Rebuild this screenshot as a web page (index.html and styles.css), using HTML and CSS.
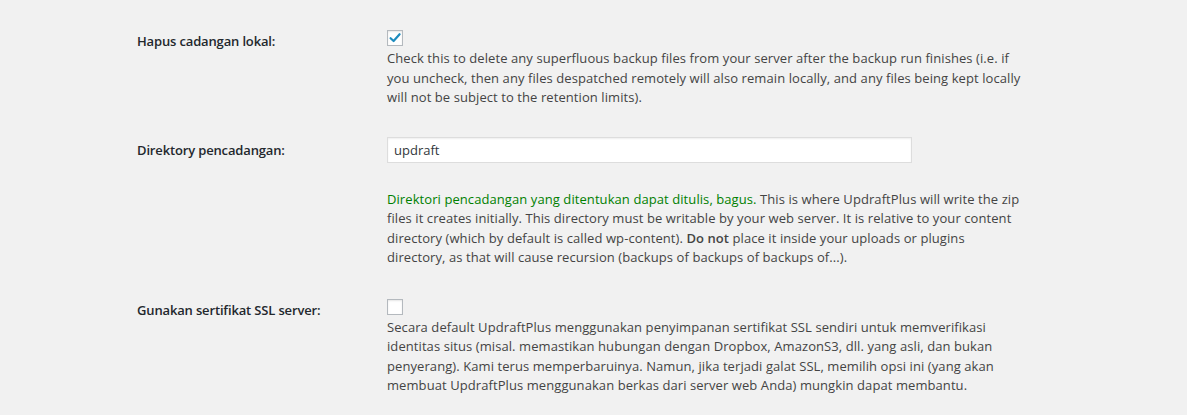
FILE: index.html
```
<!DOCTYPE html>
<html lang="id">
<head>
<meta charset="utf-8">
<title>UpdraftPlus settings</title>
<link rel="stylesheet" href="styles.css">
</head>
<body>
<div class="settings">
  <div class="row row-local">
    <div class="label">Hapus cadangan lokal:</div>
    <div class="field">
      <span class="checkbox checked"><svg viewBox="0 0 16 16" width="16" height="16"><path d="M3.6 8.2 L6.6 11 L12.6 4.2" fill="none" stroke="#1e8cbe" stroke-width="2.2" stroke-linecap="round" stroke-linejoin="round"/></svg></span>
      <p class="desc">Check this to delete any superfluous backup files from your server after the backup run finishes (i.e. if<br>you uncheck, then any files despatched remotely will also remain locally, and any files being kept locally<br>will not be subject to the retention limits).</p>
    </div>
  </div>
  <div class="row row-dir">
    <div class="label label-input">Direktory pencadangan:</div>
    <div class="field">
      <div class="input">updraft</div>
      <p class="desc desc-dir"><span class="ok">Direktori pencadangan yang ditentukan dapat ditulis, bagus.</span> This is where UpdraftPlus will write the zip<br>files it creates initially. This directory must be writable by your web server. It is relative to your content<br>directory (which by default is called wp-content). <b>Do not</b> place it inside your uploads or plugins<br>directory, as that will cause recursion (backups of backups of backups of...).</p>
    </div>
  </div>
  <div class="row row-ssl">
    <div class="label">Gunakan sertifikat SSL server:</div>
    <div class="field">
      <span class="checkbox"></span>
      <p class="desc">Secara default UpdraftPlus menggunakan penyimpanan sertifikat SSL sendiri untuk memverifikasi<br>identitas situs (misal. memastikan hubungan dengan Dropbox, AmazonS3, dll. yang asli, dan bukan<br>penyerang). Kami terus memperbaruinya. Namun, jika terjadi galat SSL, memilih opsi ini (yang akan<br>membuat UpdraftPlus menggunakan berkas dari server web Anda) mungkin dapat membantu.</p>
    </div>
  </div>
</div>
</body>
</html>
```
FILE: styles.css
```
html, body {
  margin: 0;
  padding: 0;
  background: #f1f1f1;
}
body {
  font-family: "Open Sans", "Noto Sans", sans-serif;
  font-size: 13px;
  color: #444;
  width: 1187px;
  height: 415px;
  overflow: hidden;
}
.settings {
  padding: 30px 0 0 137px;
}
.row {
  display: grid;
  grid-template-columns: 250px 750px;
}
.row-dir {
  padding-top: 29px;
}
.row-ssl {
  padding-top: 31px;
}
.label {
  font-weight: 600;
  color: #23282d;
  line-height: 19.5px;
  padding-top: 2px;
  font-size: 13px;
  letter-spacing: -0.15px;
}
.label-input {
  padding-top: 4px;
}
.field {
  display: flex;
  flex-direction: column;
  align-items: flex-start;
}
.checkbox {
  display: block;
  width: 14px;
  height: 14px;
  border: 1px solid #b4b9be;
  background: #fff;
  box-shadow: inset 0 1px 2px rgba(0,0,0,0.1);
  margin: 0 0 3px 0;
}
.checkbox svg {
  display: block;
  margin: -1px 0 0 -1px;
}
.desc {
  margin: 0;
  line-height: 19.5px;
  white-space: nowrap;
  letter-spacing: 0.08px;
}
.desc b {
  font-weight: 600;
}
.input {
  box-sizing: border-box;
  width: 525px;
  height: 26px;
  border: 1px solid #ddd;
  background: #fff;
  box-shadow: inset 0 1px 2px rgba(0,0,0,0.07);
  color: #32373c;
  font-size: 13px;
  line-height: 24px;
  padding: 0 6px;
}
.desc-dir {
  margin-top: 27px;
}
.ok {
  color: #008000;
}
```
